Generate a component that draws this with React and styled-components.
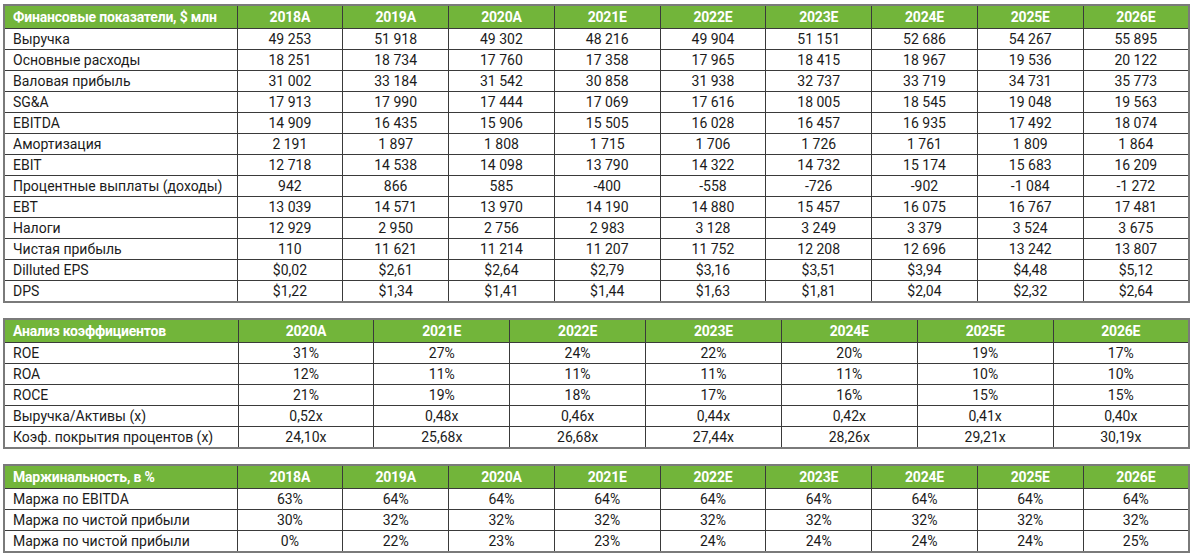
import React from "react";
import styled, { createGlobalStyle } from "styled-components";

const Global = createGlobalStyle`
  html, body { margin: 0; padding: 0; background: #fff; }
  body { font-family: Roboto, "Liberation Sans", sans-serif; color: #1b1b1b; }
`;

const Page = styled.div`
  width: 1200px;
  height: 556px;
  padding: 4px 0 0 3px;
  box-sizing: border-box;
  display: flex;
  flex-direction: column;
  gap: 15px;
`;

const Table = styled.table`
  width: 1187px;
  border-collapse: collapse;
  table-layout: fixed;
  border: 2px solid #7a7a7a;
`;

const Head = styled.th`
  background: #72b53a;
  color: #fff;
  font-weight: 700;
  font-size: 14px;
  height: 22px;
  padding: 0;
  text-align: ${(p) => (p.$first ? "left" : "center")};
  padding-left: ${(p) => (p.$first ? "8px" : "0")};
  border: 1px solid #3a3a3a;
  white-space: nowrap;
  letter-spacing: -0.2px;
`;

const Cell = styled.td`
  font-size: 14px;
  height: 20px;
  padding: 0;
  text-align: ${(p) => (p.$first ? "left" : "center")};
  padding-left: ${(p) => (p.$first ? "8px" : "0")};
  border: 1px solid #3a3a3a;
  white-space: nowrap;
  line-height: 20px;
`;

const years9 = ["2018A", "2019A", "2020A", "2021E", "2022E", "2023E", "2024E", "2025E", "2026E"];
const years7 = ["2020A", "2021E", "2022E", "2023E", "2024E", "2025E", "2026E"];

const fin = [
  ["Выручка", "49 253", "51 918", "49 302", "48 216", "49 904", "51 151", "52 686", "54 267", "55 895"],
  ["Основные расходы", "18 251", "18 734", "17 760", "17 358", "17 965", "18 415", "18 967", "19 536", "20 122"],
  ["Валовая прибыль", "31 002", "33 184", "31 542", "30 858", "31 938", "32 737", "33 719", "34 731", "35 773"],
  ["SG&A", "17 913", "17 990", "17 444", "17 069", "17 616", "18 005", "18 545", "19 048", "19 563"],
  ["EBITDA", "14 909", "16 435", "15 906", "15 505", "16 028", "16 457", "16 935", "17 492", "18 074"],
  ["Амортизация", "2 191", "1 897", "1 808", "1 715", "1 706", "1 726", "1 761", "1 809", "1 864"],
  ["EBIT", "12 718", "14 538", "14 098", "13 790", "14 322", "14 732", "15 174", "15 683", "16 209"],
  ["Процентные выплаты (доходы)", "942", "866", "585", "-400", "-558", "-726", "-902", "-1 084", "-1 272"],
  ["EBT", "13 039", "14 571", "13 970", "14 190", "14 880", "15 457", "16 075", "16 767", "17 481"],
  ["Налоги", "12 929", "2 950", "2 756", "2 983", "3 128", "3 249", "3 379", "3 524", "3 675"],
  ["Чистая прибыль", "110", "11 621", "11 214", "11 207", "11 752", "12 208", "12 696", "13 242", "13 807"],
  ["Dilluted EPS", "$0,02", "$2,61", "$2,64", "$2,79", "$3,16", "$3,51", "$3,94", "$4,48", "$5,12"],
  ["DPS", "$1,22", "$1,34", "$1,41", "$1,44", "$1,63", "$1,81", "$2,04", "$2,32", "$2,64"],
];

const ratios = [
  ["ROE", "31%", "27%", "24%", "22%", "20%", "19%", "17%"],
  ["ROA", "12%", "11%", "11%", "11%", "11%", "10%", "10%"],
  ["ROCE", "21%", "19%", "18%", "17%", "16%", "15%", "15%"],
  ["Выручка/Активы (x)", "0,52x", "0,48x", "0,46x", "0,44x", "0,42x", "0,41x", "0,40x"],
  ["Коэф. покрытия процентов (x)", "24,10x", "25,68x", "26,68x", "27,44x", "28,26x", "29,21x", "30,19x"],
];

const margins = [
  ["Маржа по EBITDA", "63%", "64%", "64%", "64%", "64%", "64%", "64%", "64%", "64%"],
  ["Маржа по чистой прибыли", "30%", "32%", "32%", "32%", "32%", "32%", "32%", "32%", "32%"],
  ["Маржа по чистой прибыли", "0%", "22%", "23%", "23%", "24%", "24%", "24%", "24%", "25%"],
];

function DataTable({ title, years, rows, firstWidth }) {
  return (
    <Table>
      <colgroup>
        <col style={{ width: firstWidth }} />
        {years.map((y) => (
          <col key={y} />
        ))}
      </colgroup>
      <thead>
        <tr>
          <Head $first>{title}</Head>
          {years.map((y) => (
            <Head key={y}>{y}</Head>
          ))}
        </tr>
      </thead>
      <tbody>
        {rows.map((r, i) => (
          <tr key={i}>
            {r.map((c, j) => (
              <Cell key={j} $first={j === 0}>
                {c}
              </Cell>
            ))}
          </tr>
        ))}
      </tbody>
    </Table>
  );
}

export default function App() {
  return (
    <>
      <Global />
      <Page>
        <DataTable title="Финансовые показатели, $ млн" years={years9} rows={fin} firstWidth="233px" />
        <DataTable title="Анализ коэффициентов" years={years7} rows={ratios} firstWidth="234px" />
        <DataTable title="Маржинальность, в %" years={years9} rows={margins} firstWidth="233px" />
      </Page>
    </>
  );
}
